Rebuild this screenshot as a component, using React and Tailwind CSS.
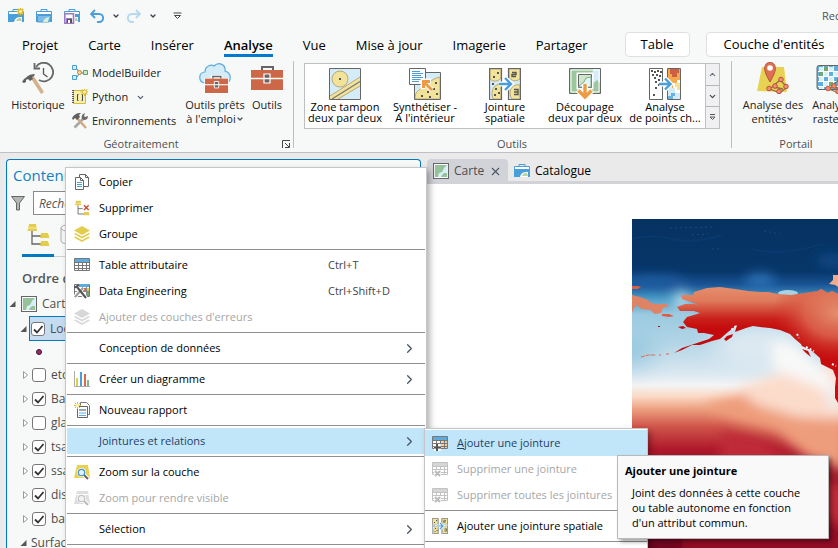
import { LuX } from "react-icons/lu";
import { FiChevronDown, FiChevronRight, FiChevronUp } from "react-icons/fi";

const tabs = ["Projet", "Carte", "Insérer", "Analyse", "Vue", "Mise à jour", "Imagerie", "Partager"];

const layers = [
  { name: "etopo", checked: false },
  { name: "Base", checked: true },
  { name: "glaciers", checked: false },
  { name: "tsanom", checked: true },
  { name: "ssanom", checked: true },
  { name: "distance", checked: true },
  { name: "bathy", checked: true },
];

/* ---------- Icons ---------- */

function CatalogIcon({ extra }) {
  return (
    <svg width="16" height="16" viewBox="0 0 16 16" className="shrink-0">
      <path d="M5 3.5V1.5h6v2" fill="none" stroke="#4a9cd6" />
      <path d="M.5 3.5h15v3H.5z" fill="#fff" stroke="#4a9cd6" />
      <path d="M0 6h16v8H0z" fill="#4a9fdb" />
      <path d="M6 14c1-4 3-5 8-5v5z" fill="#fff" />
      <path d="M8 13c1-3 3-3 5-3l1 3z" fill="#b9d3a0" />
      {extra === "new" && (
        <>
          <path d="M12.500-.5v8M8.500 3.500h8M9.700.7l5.600 5.600M15.300.7L9.700 6.300" stroke="#d9b92d" strokeWidth="1.300" />
          <circle cx="12.500" cy="3.500" r="2" fill="#fbf0a0" stroke="#d9b92d" />
        </>
      )}
      {extra === "open" && (
        <>
          <path d="M1 7h12v7H1z" fill="#fff" />
          <path d="M1.500 14V7.500h14L13 14z" fill="#7bbce8" stroke="#4a9cd6" />
          <path d="M7 14c1-4 3-4 6-5l-1 5z" fill="#dcefd2" />
        </>
      )}
      {extra === "save" && (
        <>
          <path d="M0 5h11v11H0z" fill="#fff" />
          <path d="M.8 5.800h8.700v9.400H.8z" fill="#fff" stroke="#9b7cc0" strokeWidth="1.600" />
          <path d="M2 10h6v5H2z" fill="#9b7cc0" />
          <path d="M3 11h5v4H3z" fill="#555" />
          <path d="M4 12h2v3H4z" fill="#fff" />
        </>
      )}
    </svg>
  );
}

function UndoIcon({ redo }) {
  return (
    <svg width="14" height="14" viewBox="0 0 14 14" className={redo ? "-scale-x-100" : ""}>
      <path
        d="M5 1L1 5l4 4M1.500 5H9c5.500 0 5.500 8 0 8H7"
        fill="none"
        stroke={redo ? "#b7d9f0" : "#4a9fdb"}
        strokeWidth="1.900"
      />
    </svg>
  );
}

function HistoryIcon() {
  return (
    <svg width="32" height="32" viewBox="0 0 32 32">
      <path d="M14 5a9.300 9.300 0 1 1 3 13" fill="none" stroke="#666" strokeWidth="1.800" />
      <path d="M12.500 1v5.500H18" fill="none" stroke="#666" strokeWidth="1.800" />
      <path d="M21.500 6v6l4 3" fill="none" stroke="#555" strokeWidth="1.300" />
      <path d="M8 15l3-2 11 17-3 2z" fill="#d5b08c" />
      <path d="M0 20l2-3c3-2 5-5 11-5l-1 2-2 1 1 2-3 2-2-2-2 1v2l-2 1z" fill="#606060" />
    </svg>
  );
}

function ModelIcon() {
  return (
    <svg width="16" height="16" viewBox="0 0 16 16">
      <path d="M4 3l4 5-4 5M7 8h5" fill="none" stroke="#666" />
      <path d="M.5.500h4v4h-4zM.5 10.500h4v4h-4z" fill="#d4ecfa" stroke="#4a9fdb" />
      <circle cx="7.500" cy="7.500" r="2" fill="#f6d99e" stroke="#b98a3e" />
      <path d="M11.500 5.500h4v4h-4z" fill="#cfe8c9" stroke="#5ea36c" />
    </svg>
  );
}

function PythonIcon() {
  return (
    <svg width="16" height="16" viewBox="0 0 16 16">
      <path d="M1.500 1.500h12v13h-12z" fill="#f7efae" stroke="#d5bb3c" />
      <path d="M1 1v14" stroke="#555" strokeWidth="2" strokeDasharray="1 1" />
      <path d="M6.500 5.500h-1v6h1M9.500 5.500h1v6h-1" fill="none" stroke="#444" />
      <path d="M12.500-1v8M8.500 3h8M9.700.2l5.600 5.600M15.300.2L9.700 5.800" stroke="#d9b92d" />
      <circle cx="12.500" cy="3" r="2" fill="#fff6b5" stroke="#d9b92d" />
    </svg>
  );
}

function EnvIcon() {
  return (
    <svg width="16" height="16" viewBox="0 0 16 16">
      <path d="M2.500 14.500L12 5" stroke="#a7a7a7" strokeWidth="2.600" />
      <path d="M10 6c-1-3 0-5 3-6l-1 3 1 1 3-1c0 3-2 4-4 4z" fill="#696969" />
      <path d="M5 5l9 10" stroke="#d0aa87" strokeWidth="2.600" />
      <path d="M0 5c2-3 4-5 9-5L7 2l1 2-3 3-2-2-2 2z" fill="#606060" />
    </svg>
  );
}

function Toolbox({ cloud }) {
  return (
    <svg width="32" height="32" viewBox="0 0 32 32">
      {cloud && (
        <path
          d="M6 21C-1 20-1 10 6 10 6 4 12 2 15 4c5-5 12-1 11 5 7 2 7 11 0 12z"
          fill="#d4ebf8"
          stroke="#5babde"
          strokeWidth="1.200"
        />
      )}
      <g transform={cloud ? "translate(6 13) scale(.72)" : "translate(0 3)"}>
        {cloud && <path d="M-1 4h9V0h16v4h9v22H-1z" fill="#fff" />}
        <path d="M11 5V2h11v3" fill="none" stroke="#666" strokeWidth="2" />
        <path d="M0 5h32v20H0z" fill="#cc6848" />
        <path d="M0 13.500h32" stroke="#fff" strokeWidth="1.500" />
        <path d="M13 9h6v9h-6z" fill="#666" stroke="#fff" strokeWidth="1.200" />
        <path d="M13 13.500h6" stroke="#fff" strokeWidth="1.500" />
      </g>
    </svg>
  );
}

function BufferIcon() {
  return (
    <svg width="32" height="32" viewBox="0 0 32 32">
      <path d="M.5.500h31v31H.5z" fill="#d4ebf8" />
      <path d="M1 28L31 9v9L9 31H1z" fill="#f2e39a" />
      <path d="M1 28L31 9M9 31l22-13" stroke="#b9a878" />
      <path d="M3 31l28-17.500" stroke="#777" strokeWidth="1.300" />
      <circle cx="11" cy="11" r="8" fill="#f2e39a" stroke="#b9a878" />
      <path d="M10 10h2v2h-2z" fill="#555" />
      <path d="M.5.500h31v31H.5z" fill="none" stroke="#666" />
    </svg>
  );
}

function SummarizeIcon() {
  return (
    <svg width="32" height="32" viewBox="0 0 32 32">
      <path d="M5.500 4.500h26v27h-26z" fill="#d4ebf8" />
      <path d="M6 31c0-8 3-7 6-11 6-2 9-9 19-11v22z" fill="#f2e39a" stroke="#b9a878" />
      <path d="M18 23h2v2h-2zM24 20h2v2h-2zM26 14h2v2h-2zM12 27h2v2h-2zM20 28h2v2h-2zM27 25h2v2h-2z" fill="#555" />
      <path d="M5.500 4.500h26v27h-26z" fill="none" stroke="#666" />
      <path d="M.5.500h16v16H.5z" fill="#fff" stroke="#666" />
      <path d="M3 3.500h8M3 5.500h11M3 7.500h9M3 9.500h11M3 11.500h11M3 13.500h7" stroke="#4a9fdb" />
      <path d="M14 21v-8h8M15 14l8 8" fill="none" stroke="#fff" strokeWidth="5" />
      <path d="M14.500 20v-6.500H21M15 14l8 8" fill="none" stroke="#ec9c45" strokeWidth="3" />
    </svg>
  );
}

function SpatialJoinIcon({ size = 32 }) {
  return (
    <svg width={size} height={size} viewBox="0 0 32 32" className="shrink-0">
      <path d="M.5.500h12v31H.5zM19.500.500h12v31h-12z" fill="#d4ebf8" />
      <path d="M1 1h11v9c-3 4-8 4-11 1zM12 16c-7 0-11 7-8 15h8zM20 1h11v10c-4 3-9 2-11-2zM31 17c-8-2-13 7-8 14h8z" fill="#f2e39a" stroke="#b9a878" />
      <path d="M4 8h2v2H4zM8 4h2v2H8zM6 20h2v2H6zM9 24h2v2H9zM5 26h2v2H5zM3 15h2v2H3z" fill="#555" />
      <path d="M23 4.500h4v2h-4v2h4M25 21.500h4v5h-4M25 24h4" fill="none" stroke="#555" strokeWidth="1.400" />
      <path d="M.5.500h12v31H.5zM19.500.500h12v31h-12z" fill="none" stroke="#666" strokeWidth="1.200" />
      <path d="M10 16h11M16 10l6 6-6 6" fill="none" stroke="#fff" strokeWidth="5" />
      <path d="M10 16h11M16 10l6 6-6 6" fill="none" stroke="#4a9fdb" strokeWidth="2.400" />
    </svg>
  );
}

function ClipIcon() {
  return (
    <svg width="32" height="32" viewBox="0 0 32 32">
      <path d="M.5.500h31v25H.5z" fill="#9cc69d" />
      <path d="M24 1h7v14l-3-3-3 3-2-5z" fill="#d4ebf8" />
      <path d="M2 2h28v22H2z" fill="none" stroke="#fff" />
      <path d="M7.500 4.500h17v17h-17z" fill="#fff" />
      <path d="M9.500 6.500h13v13h-13z" fill="#cfe6c9" stroke="#666" />
      <path d="M10 18l5-4 2-4 5-1v10H10z" fill="#e4f3fb" stroke="#7dae83" />
      <path d="M.5.500h31v25H.5z" fill="none" stroke="#666" />
      <path d="M16 16v13M9 22l7 7 7-7" fill="none" stroke="#fff" strokeWidth="6" />
      <path d="M16 16v13M9.500 22.500l6.500 6.500 6.500-6.500" fill="none" stroke="#ec9c45" strokeWidth="3.400" />
    </svg>
  );
}

function HotSpotIcon() {
  return (
    <svg width="32" height="32" viewBox="0 0 32 32">
      <path d="M.5.500h13v31H.5zM18.500.500h13v31h-13z" fill="#fff" />
      <path
        d="M2 2h2v2H2zM5 3h2v2H5zM8 2h2v2H8zM11 3h2v2h-2zM3 6h2v2H3zM7 6h2v2H7zM10 7h2v2h-2zM5 9h2v2H5zM9 11h2v2H9zM6 13h2v2H6zM9 16h2v2H9zM6 19h2v2H6zM4 26h2v2H4z"
        fill="#555"
      />
      <path d="M19 1h12v11h-3v3h-4v5h-2v-5h-3z" fill="#f6a94c" />
      <path d="M21 1h9v4h-2v4h-5V6h-2z" fill="#cc6042" />
      <path d="M19 17h4v3h3v5h5v6H19z" fill="#d4ebf8" />
      <path d="M19 28h3v-3h4v3h-2v3h-5z" fill="#65b3e3" />
      <path d="M26 15h5v7h-3v-3h-2z" fill="#f9df91" />
      <path d="M.5.500h13v31H.5zM18.500.500h13v31h-13z" fill="none" stroke="#666" />
      <path d="M10 16h11M16 10.500l5.500 5.500-5.500 5.500" fill="none" stroke="#fff" strokeWidth="5" />
      <path d="M10 16h11M16 10.500l5.500 5.500-5.500 5.500" fill="none" stroke="#4a9fdb" strokeWidth="2.400" />
    </svg>
  );
}

function FeatureNodes() {
  return (
    <g fill="#ee8f70" stroke="#c0503a">
      <path d="M13 27l10-9 7 7-7 6zM17 25l9 2" fill="none" stroke="#8a7240" strokeWidth="1.300" />
      <circle cx="12" cy="26.500" r="2.300" />
      <circle cx="18" cy="24" r="2.300" />
      <circle cx="24" cy="17.500" r="2.300" />
      <circle cx="29" cy="24.500" r="2.300" />
      <circle cx="22" cy="29.500" r="2.300" />
    </g>
  );
}

function FeatureIcon() {
  return (
    <svg width="32" height="32" viewBox="0 0 32 32">
      <path d="M5 5h22l3 25-30-1z" fill="#e8d254" />
      <path d="M13 20C8 11 7 8 8 4c2-5 8-5 10 0 1 4 0 7-5 16z" fill="#dd6f53" stroke="#b9523b" />
      <circle cx="13" cy="6" r="2.800" fill="#fff" />
      <FeatureNodes />
    </svg>
  );
}

function RasterIcon() {
  return (
    <svg width="32" height="32" viewBox="0 0 32 32" className="shrink-0">
      <rect x="1" y="3.500" width="30" height="24" rx="2" fill="#5dafe2" stroke="#666" />
      <path d="M3 5h4v4H3zM13 5h4v4h-4zM8 10h4v4H8zM18 10h4v4h-4zM3 15h4v4H3zM13 15h4v4h-4zM8 20h4v4H8zM3 24h4v3H3z" fill="#d9effa" />
      <path d="M8 5h4v4H8zM3 10h4v4H3zM13 20h4v4h-4z" fill="#72a86f" />
      <path d="M7.500 4v23M12.500 4v23M17.500 4v23M22.500 4v23M2 9.500h28M2 14.500h28M2 19.500h28M2 24.500h28" stroke="#fff" />
      <FeatureNodes />
    </svg>
  );
}

function MapIcon() {
  return (
    <svg width="16" height="16" viewBox="0 0 16 16" className="shrink-0">
      <path d="M.5.500h15v15H.5z" fill="#fff" stroke="#666" strokeWidth="1.200" />
      <path d="M2 2h12v12H2z" fill="#96c29a" />
      <path d="M14 2v8h-3l-2 2-1 2H5l1-4 3-1 2-4z" fill="#d8effa" />
    </svg>
  );
}

function TreeIcon({ large, remove }) {
  return (
    <svg width={large ? 24 : 16} height={large ? 24 : 16} viewBox="0 0 24 24" className="shrink-0">
      <path d="M6 8v13h9M6 13h9" fill="none" stroke="#666" strokeWidth="1.300" />
      <path d="M3 1h7l1 7H1.500zM15 10h7l1.500 5H14zM15 18h7l1.500 5H14z" fill="#e4cd4e" />
      <path d="M1.500 5h9" stroke="#f5ebb4" />
      {remove && (
        <>
          <path d="M13 7h10v10H13z" fill="#fff" />
          <path d="M15 8l7 7m0-7l-7 7" stroke="#cc4e35" strokeWidth="2.200" />
        </>
      )}
    </svg>
  );
}

function CopyIcon() {
  return (
    <svg width="16" height="16" viewBox="0 0 16 16">
      <path d="M5.500.500h6l3 3v9h-9z" fill="#fff" stroke="#666" />
      <path d="M11.500.500v3h3" fill="none" stroke="#666" />
      <path d="M1.500 3.500h5l3 3v9h-8z" fill="#fff" stroke="#666" />
      <path d="M6.500 3.500v3h3" fill="none" stroke="#666" />
      <path d="M3 8.500h5M3 10.500h5M3 12.500h5" stroke="#4a9fdb" />
    </svg>
  );
}

function LayersIcon({ disabled }) {
  const color = disabled ? "#d8d8d8" : "#e4cd4e";
  return (
    <svg width="16" height="16" viewBox="0 0 16 16">
      <path d="M0 4.500L8 0l8 4.500L8 9z" fill={color} />
      <path d="M0 8l1.500-1L8 10.500 14.500 7 16 8l-8 4.500zM0 11.500l1.500-1L8 14l6.500-3.500 1.500 1L8 16z" fill={color} />
    </svg>
  );
}

function TableIcon({ mark, disabled }) {
  const line = disabled ? "#c2c2c2" : "#777";
  return (
    <svg width="16" height="16" viewBox="0 0 16 16">
      <path d="M.5 1.500h15v12H.5z" fill="#fff" stroke={line} />
      {mark === "plus" && <path d="M9 5h6v8H9z" fill="#f5cf9e" />}
      <path d="M1 2h14v3H1z" fill={disabled ? "#d6d6d6" : "#5babde"} />
      <path d="M4.500 5v8M8.500 5v8M12.500 5v8M1 5.500h14M1 8.500h14M1 11.500h14" stroke={line} />
      {mark && <path d="M2 9h7v7H2z" fill="#fff" fillOpacity=".8" />}
      {mark === "plus" && <path d="M5 9v7M2 12.500h7" stroke="#555" strokeWidth="2" />}
      {mark === "cross" && <path d="M3 10l5 5m0-5l-5 5" stroke="#bbb" strokeWidth="2" />}
    </svg>
  );
}

function EngineeringIcon() {
  return (
    <svg width="16" height="16" viewBox="0 0 16 16">
      <path d="M.5 1.500h15v12H.5z" fill="#fff" stroke="#777" />
      <path d="M5 1h10v3H5z" fill="#5babde" />
      <path d="M9 5h3v3H9z" fill="#d96b4d" />
      <path d="M12 5h3v3h-3z" fill="#e4cd4e" />
      <path d="M12 9h3v4h-3z" fill="#72a86f" />
      <path d="M8.500 4v9M12.500 4v9M1 8.500h14" stroke="#888" />
      <path d="M1 14l8-9M2 4l10 11" stroke="#fff" strokeWidth="4" />
      <path d="M1 14l8-9" stroke="#999" strokeWidth="2" />
      <path d="M3 4l9 11M0 5l5-3" stroke="#555" strokeWidth="2" />
    </svg>
  );
}

function ChartIcon() {
  return (
    <svg width="16" height="16" viewBox="0 0 16 16">
      <path d="M.5 0v15.500H16" fill="none" stroke="#aaa" />
      <path d="M2 7h2v8H2z" fill="#e4cd4e" />
      <path d="M6 1h2v14H6z" fill="#4a9fdb" />
      <path d="M10 3h2v12h-2z" fill="#d96b4d" />
      <path d="M13 9h2v6h-2z" fill="#85b685" />
    </svg>
  );
}

function ReportIcon() {
  return (
    <svg width="16" height="16" viewBox="0 0 16 16">
      <path d="M6.500.500h6l3 3v9h-9z" fill="#fff" stroke="#777" />
      <path d="M3.500 4.500h10v11h-10z" fill="#fff" stroke="#666" />
      <path d="M5 7h7v2H5z" fill="#9aa6ad" />
      <path d="M5 11h7M5 13.500h7" stroke="#5babde" />
      <path d="M3.500 0v7M0 3.500h7M1 1l5 5m0-5L1 6" stroke="#d9b92d" />
      <circle cx="3.500" cy="3.500" r="1.700" fill="#fff0a4" />
    </svg>
  );
}

function ZoomLayerIcon({ disabled }) {
  const line = disabled ? "#c4c4c4" : "#4a93cc";
  return (
    <svg width="16" height="16" viewBox="0 0 16 16">
      <path d="M3 1h11l2 13H0z" fill={disabled ? "#dedede" : "#e8d254"} />
      {disabled && <path d="M1 4.500h14" stroke="#fff" />}
      <path d="M10 11l4 4" stroke="#fff" strokeWidth="4" />
      <circle cx="7.500" cy="8.500" r="4.500" fill="#fff" />
      <path d="M10 11l4 4" stroke={disabled ? "#bbb" : "#666"} strokeWidth="2" />
      <circle cx="7.500" cy="8.500" r="3.200" fill={disabled ? "#f2f2f2" : "#e3f3fc"} stroke={line} strokeWidth="1.300" />
    </svg>
  );
}

function Expander({ open }) {
  return (
    <svg width="7" height="8" viewBox="0 0 7 8" className="shrink-0">
      {open ? (
        <path d="M6.500 1v6h-6z" fill="#555" />
      ) : (
        <path d="M1.500.500L5.500 4l-4 3.500z" fill="#fff" stroke="#999" />
      )}
    </svg>
  );
}

/* ---------- Ribbon ---------- */

function BigButton({ icon, lines, arrow, className }) {
  return (
    <button className={`flex flex-col items-center shrink-0 text-[11px] leading-[14px] whitespace-nowrap ${className}`}>
      <span className="h-9">{icon}</span>
      {lines.map((line, i) => (
        <span key={line} className="flex items-center">
          {line}
          {arrow && i === lines.length - 1 && <FiChevronDown size={8} strokeWidth={4} className="text-gray-600" />}
        </span>
      ))}
    </button>
  );
}

function SmallButton({ icon, label, arrow }) {
  return (
    <button className="flex items-center h-6 gap-1 text-[11px] whitespace-nowrap">
      {icon}
      {label}
      {arrow && <FiChevronDown size={9} strokeWidth={3} className="ml-1 text-gray-600" />}
    </button>
  );
}

function GalleryItem({ icon, lines }) {
  return (
    <button className="w-20 pt-1 flex flex-col items-center text-[11px] leading-[11px] whitespace-nowrap">
      <span className="h-[33px]">{icon}</span>
      {lines.map((line) => (
        <span key={line}>{line}</span>
      ))}
    </button>
  );
}

function GroupLabel({ children }) {
  return <div className="mt-auto mb-[-4px] text-center text-[11px] leading-4 text-[#505050]">{children}</div>;
}

function Ribbon() {
  return (
    <div className="flex h-[95px] shrink-0 pt-[3px] border-b border-[#c0c0c4]">
      {/* Geoprocessing */}
      <div className="w-[294px] shrink-0 flex flex-col border-r border-[#bcbfc0] mb-1">
        <div className="flex">
          <BigButton className="w-[72px] pl-1 pt-[1px]" icon={<HistoryIcon />} lines={["Historique"]} />
          <div className="w-[111px]">
            <SmallButton icon={<ModelIcon />} label="ModelBuilder" />
            <SmallButton icon={<PythonIcon />} label="Python" arrow />
            <SmallButton icon={<EnvIcon />} label="Environnements" />
          </div>
          <BigButton className="w-[64px] pt-[1px]" icon={<Toolbox cloud />} lines={["Outils prêts", "à l'emploi"]} arrow />
          <BigButton className="w-[40px] pt-[1px]" icon={<Toolbox />} lines={["Outils"]} />
        </div>
        <div className="mt-auto mb-[-4px] flex items-center">
          <div className="mx-auto text-[11px] leading-4 text-[#505050]">Géotraitement</div>
          <button aria-label="Options" className="mr-[3px]">
            <svg width="8" height="8" viewBox="0 0 8 8">
              <path d="M.5 8V.5H8M3 3l4 4M7.500 3v4.500H3" fill="none" stroke="#444" />
            </svg>
          </button>
        </div>
      </div>

      {/* Tools gallery */}
      <div className="w-[438px] shrink-0 flex flex-col border-r border-[#bcbfc0] mb-1 pl-[10px] pr-[11px] pt-[2px]">
        <div className="flex h-[66px] bg-white border border-[#bfbfc3] text-black">
          <GalleryItem icon={<BufferIcon />} lines={["Zone tampon", "deux par deux"]} />
          <GalleryItem icon={<SummarizeIcon />} lines={["Synthétiser -", "A l'intérieur"]} />
          <GalleryItem icon={<SpatialJoinIcon />} lines={["Jointure", "spatiale"]} />
          <GalleryItem icon={<ClipIcon />} lines={["Découpage", "deux par deux"]} />
          <GalleryItem icon={<HotSpotIcon />} lines={["Analyse", "de points ch..."]} />
          <div className="ml-auto w-[14px] flex flex-col border-l border-[#bfbfc3] bg-[#f0f0f3] text-gray-700">
            <button aria-label="Précédent" className="flex-1 flex items-center justify-center text-gray-500">
              <FiChevronUp size={9} strokeWidth={3} />
            </button>
            <button aria-label="Suivant" className="flex-1 flex items-center justify-center border-y border-[#b4b4b9]">
              <FiChevronDown size={9} strokeWidth={3} />
            </button>
            <button aria-label="Tous les outils" className="flex-1 flex items-center justify-center">
              <svg width="7" height="7" viewBox="0 0 7 7">
                <path d="M1 .5h5M1 3l2.500 2.500L6 3z" fill="none" stroke="#555" />
              </svg>
            </button>
          </div>
        </div>
        <GroupLabel>Outils</GroupLabel>
      </div>

      {/* Portal */}
      <div className="flex flex-col shrink-0 mb-1 w-[128px]">
        <div className="flex">
          <BigButton className="w-[82px] pt-[1px]" icon={<FeatureIcon />} lines={["Analyse des", "entités"]} arrow />
          <BigButton className="w-[36px] pt-[1px]" icon={<RasterIcon />} lines={["Analyse", "raster"]} arrow />
        </div>
        <GroupLabel>Portail</GroupLabel>
      </div>
    </div>
  );
}

/* ---------- Contents panel ---------- */

function Check({ label, checked }) {
  return (
    <label className="flex items-center gap-[5px]">
      <span className="relative block w-[14px] h-[14px]">
        <input
          type="checkbox"
          defaultChecked={checked}
          className="peer block appearance-none w-[14px] h-[14px] rounded-[3px] border border-[#777] bg-white"
        />
        <svg viewBox="0 0 14 14" className="absolute inset-0 hidden peer-checked:block pointer-events-none">
          <path d="M3 7.500l3 3L11.500 4" fill="none" stroke="#333" strokeWidth="1.800" />
        </svg>
      </span>
      {label}
    </label>
  );
}

function ContentsPanel() {
  return (
    <aside className="w-[415px] shrink-0 ml-[6px] mt-[6px] rounded-t border border-b-0 border-[#0079c1] bg-[#f7f9f8] text-[12px] text-[#4c4c4c]">
      <h2 className="h-[31px] pl-[6px] text-[15px] leading-[31px] text-[#147fc1]">Contenu</h2>
      <div className="flex items-center gap-2 h-6 pl-1">
        <svg width="14" height="16" viewBox="0 0 14 16">
          <path d="M.5 1.500h13L8.500 8v7h-3V8z" fill="#b4b4b9" stroke="#666" />
        </svg>
        <input
          type="text"
          aria-label="Rechercher"
          placeholder="Rechercher"
          className="w-[340px] h-6 px-[5px] bg-white border border-[#8a8a8a] italic placeholder:text-[#555]"
        />
      </div>
      <div className="flex h-[42px] pt-[8px] mx-[15px] border-b border-[#cfcfcf]">
        <button aria-label="Ordre de dessin" className="w-8 h-[34px] flex justify-center border-b-3 border-[#0079c1]">
          <TreeIcon large />
        </button>
        <button aria-label="Source de données" className="w-8 flex justify-center">
          <svg width="22" height="24" viewBox="0 0 22 24">
            <path d="M2 5v13c0 4 18 4 18 0V5" fill="none" stroke="#aaa" />
            <ellipse cx="11" cy="5" rx="9" ry="3.500" fill="none" stroke="#aaa" />
          </svg>
        </button>
      </div>
      <h3 className="h-[35px] pl-[15px] pt-1 text-[13px] leading-[34px] font-semibold text-[#555]">Ordre de dessin</h3>
      <div className="flex items-center gap-[5px] h-6 pl-[2px]">
        <Expander open />
        <MapIcon />
        Carte
      </div>
      <div className="flex items-center gap-[2px] h-[25px] pl-[13px]">
        <Expander open />
        <div className="flex items-center flex-1 h-[25px] px-[1px] border border-[#0079c1] bg-[#c5dcf0]">
          <Check label="Localisations" checked />
        </div>
      </div>
      <div className="h-[22px] pl-[29px] pt-2">
        <div className="w-[6px] h-[6px] rounded-full bg-[#9c2b63] border border-[#3c1729]"></div>
      </div>
      {layers.map((layer) => (
        <div key={layer.name} className="flex items-center gap-[3px] h-6 pl-[15px]">
          <Expander />
          <Check label={layer.name} checked={layer.checked} />
        </div>
      ))}
      <div className="flex items-center gap-1 h-6 pl-[13px]">
        <Expander open />
        Surfaces
      </div>
    </aside>
  );
}

/* ---------- Map view ---------- */

function TemperatureRaster() {
  return (
    <svg viewBox="0 0 206 329" preserveAspectRatio="xMinYMin slice" className="w-full h-full">
      <defs>
        <linearGradient id="sea" x1="0" y1="0" x2="0" y2="1">
          <stop offset="0" stopColor="#063262" />
          <stop offset=".16" stopColor="#073669" />
          <stop offset=".2" stopColor="#1a5596" />
          <stop offset=".24" stopColor="#4a99c6" />
          <stop offset=".29" stopColor="#9bcae0" />
          <stop offset=".38" stopColor="#b4d6e7" />
          <stop offset=".47" stopColor="#dbe8f1" />
          <stop offset=".505" stopColor="#f4f4f5" />
          <stop offset=".54" stopColor="#fbd9c5" />
          <stop offset=".58" stopColor="#ec9c7c" />
          <stop offset=".63" stopColor="#d0564b" />
          <stop offset=".7" stopColor="#ae182b" />
          <stop offset=".84" stopColor="#860d24" />
          <stop offset="1" stopColor="#70061f" />
        </linearGradient>
        <linearGradient id="land" x1="0" y1="0" x2="0" y2="1">
          <stop offset="0" stopColor="#e5906f" />
          <stop offset=".12" stopColor="#df7b5c" />
          <stop offset=".26" stopColor="#c9201a" />
          <stop offset=".34" stopColor="#c40a0c" />
          <stop offset="1" stopColor="#c9100f" />
        </linearGradient>
        <radialGradient id="inland">
          <stop offset="0" stopColor="#e58e6e" />
          <stop offset=".5" stopColor="#dc6b51" stopOpacity=".8" />
          <stop offset="1" stopColor="#cc2c22" stopOpacity="0" />
        </radialGradient>
        <filter id="soft" x="-50%" y="-50%" width="200%" height="200%">
          <feGaussianBlur stdDeviation="6" />
        </filter>
        <filter id="softer" x="-50%" y="-50%" width="200%" height="200%">
          <feGaussianBlur stdDeviation="12" />
        </filter>
        <clipPath id="coast">
          <path d="M49 76H61L62 73 75 69 88 68 103 70 116 72 128 73H136L146 75 159 76 173 74 186 72 189 70 196 74 200 72 206 75V184L203 179V168L204 159 201 151 189 145 188 139 179 131 170 127 169 125 163 120 158 115 148 111 138 109 128 108 121 107 114 109 103 113 105 106 96 113 88 120 80 122 68 126 60 126 50 131 42 134 50 129 65 124 77 120 82 116 72 114H66L65 110 55 108 51 103 55 98 65 95 68 94 62 92H48L45 88 53 85H63L67 86 59 83 50 80z" />
        </clipPath>
      </defs>

      <rect width="206" height="329" fill="url(#sea)" />

      {/* arctic water */}
      <g filter="url(#soft)">
        <ellipse cx="128" cy="61" rx="15" ry="6" fill="#2f78bd" />
        <ellipse cx="200" cy="42" rx="16" ry="8" fill="#0e4480" />
        <ellipse cx="20" cy="62" rx="34" ry="5" fill="#2262a8" />
        <ellipse cx="50" cy="82" rx="8" ry="9" fill="#b9dbe9" />
      </g>
      <path d="M0 20q20-5 40 0t50-4M120 30q30 8 70-5" fill="none" stroke="#0d427a" strokeWidth="2" opacity=".4" />
      <path d="M38 9l45-1M60 16l16-1M132 12l16 3M80 30h10" stroke="#285384" strokeDasharray="2 3" strokeWidth=".7" />
      <ellipse cx="156" cy="74" rx="10" ry="3" fill="#a8d2e2" />

      {/* gulf and warm belt */}
      <g filter="url(#softer)">
        <ellipse cx="130" cy="128" rx="50" ry="24" fill="#dfeaf2" />
        <ellipse cx="0" cy="132" rx="22" ry="14" fill="#8ec3dc" />
      </g>
      <g filter="url(#soft)">
        <path d="M70 186l55-14 90-10v90l-40-14-30-24-40-12z" fill="#ee9d7c" />
        <path d="M105 170l50-18 60-10v58l-50-2-40-12z" fill="#fbdccb" />
        <path d="M90 212l40 8 34 26 60 26v60H80z" fill="#bf2a37" />
        <path d="M50 250l60 14 110 46v30H50z" fill="#930f27" />
        <path d="M140 122l22 3 18 15 18 16 8 24-24-14-22-8-20-8z" fill="#f8f8f8" />
        <ellipse cx="202" cy="178" rx="5" ry="14" fill="#eaf1f6" />
      </g>

      {/* land */}
      <g clipPath="url(#coast)">
        <rect y="66" width="206" height="130" fill="url(#land)" />
        <ellipse cx="206" cy="94" rx="66" ry="48" fill="url(#inland)" />
      </g>
      <path d="M0 76l8 2 8 3 3 3 4 1h11l3 2-6 2-2 5-6 1-5-4-9-1-4-4-3 3-2 5z" fill="#df8367" />
      <path d="M0 67h6l3 1-3 2H0zM30 95h7l5 2-5 1-7-1z" fill="#d95f46" />
      <path d="M92 120l3-3 6-2-1 3-6 4zM46 108l5-1 3 2-4 1zM170 130l6 2 3 6-5-4zM26 107h2v1h-2z" fill="#c40a0c" />
      <path d="M9 138l7-2h8M27 136h2M34 135h3" fill="none" stroke="#db6b50" strokeDasharray="4 1" />
      <path d="M165 115l2 4M174 128l8 4M200 145l4 2M104 107l-6 5" stroke="#eff4f7" strokeWidth="2" strokeDasharray="2 2" />
      <path d="M201 56h5v12l-3-2-6-1 4-4z" fill="#efab8b" />
    </svg>
  );
}

function MapView() {
  return (
    <main className="flex-1 min-w-0 ml-[6px] mt-[6px] flex flex-col text-[12px]">
      <div role="tablist" className="flex h-[25px] border-b-3 border-[#d2d3d8]">
        <div className="flex items-center gap-[5px] w-[81px] h-6 px-[6px] rounded-t bg-[#d2d3d8] text-[#4c4c4c]">
          <MapIcon />
          <button role="tab" aria-selected="true">Carte</button>
          <button aria-label="Fermer" className="ml-auto">
            <LuX size={13} className="text-gray-600" />
          </button>
        </div>
        <button role="tab" aria-selected="false" className="flex items-center gap-[5px] px-[6px] pt-[2px] text-black">
          <CatalogIcon />
          Catalogue
        </button>
      </div>
      <div className="flex-1 min-h-0 pl-[205px] pt-[35px] bg-white overflow-hidden">
        <TemperatureRaster />
      </div>
    </main>
  );
}

/* ---------- Menus ---------- */

function MenuItem({ icon, label, shortcut, arrow, disabled, active, accel }) {
  const color = disabled ? "text-[#a6a6a6]" : active ? "text-[#1f3f66]" : "text-black";
  return (
    <button
      role="menuitem"
      disabled={disabled}
      className={`flex items-center w-full h-[26px] pl-[7px] text-left whitespace-nowrap ${color} ${active ? "bg-[#c2e6f9]" : ""}`}
    >
      <span className="w-[25px] shrink-0">{icon}</span>
      <span className="flex-1">
        {accel && <u>{accel}</u>}
        {label}
      </span>
      {shortcut && <span className="w-[97px] text-[#444]">{shortcut}</span>}
      {arrow && <FiChevronRight size={15} className="mr-2 text-gray-600" />}
    </button>
  );
}

function Separator() {
  return <hr className="my-[2px] border-[#8f8f8f]" />;
}

function ContextMenu() {
  return (
    <div role="menu" className="absolute left-[65px] top-[167px] w-[362px] p-[1px] bg-white border border-[#c6c6ca] shadow-[3px_3px_6px_rgba(0,0,0,0.3)] text-[11px]">
      <MenuItem icon={<CopyIcon />} label="Copier" />
      <MenuItem icon={<TreeIcon remove />} label="Supprimer" />
      <MenuItem icon={<LayersIcon />} label="Groupe" />
      <Separator />
      <MenuItem icon={<TableIcon />} label="Table attributaire" shortcut="Ctrl+T" />
      <MenuItem icon={<EngineeringIcon />} label="Data Engineering" shortcut="Ctrl+Shift+D" />
      <MenuItem icon={<LayersIcon disabled />} label="Ajouter des couches d'erreurs" disabled />
      <Separator />
      <MenuItem label="Conception de données" arrow />
      <Separator />
      <MenuItem icon={<ChartIcon />} label="Créer un diagramme" arrow />
      <Separator />
      <MenuItem icon={<ReportIcon />} label="Nouveau rapport" />
      <Separator />
      <MenuItem label="Jointures et relations" arrow active />
      <Separator />
      <MenuItem icon={<ZoomLayerIcon />} label="Zoom sur la couche" />
      <MenuItem icon={<ZoomLayerIcon disabled />} label="Zoom pour rendre visible" disabled />
      <Separator />
      <MenuItem label="Sélection" arrow />
      <Separator />
    </div>
  );
}

function JoinMenu() {
  return (
    <div role="menu" className="absolute left-[424px] top-[428px] w-[224px] pt-[1px] pb-6 bg-white border border-[#c6c6ca] shadow-[3px_3px_6px_rgba(0,0,0,0.3)] text-[11px]">
      <MenuItem icon={<TableIcon mark="plus" />} accel="A" label="jouter une jointure" active />
      <MenuItem icon={<TableIcon mark="cross" disabled />} label="Supprimer une jointure" disabled />
      <MenuItem icon={<TableIcon mark="cross" disabled />} label="Supprimer toutes les jointures" disabled />
      <Separator />
      <MenuItem icon={<SpatialJoinIcon size={16} />} label="Ajouter une jointure spatiale" />
      <Separator />
    </div>
  );
}

function Tooltip() {
  return (
    <div role="tooltip" className="absolute left-[617px] top-[455px] w-[212px] px-[7px] pt-[7px] pb-2 bg-[#f9f9f9] border border-[#b9b9b9] shadow-[3px_3px_4px_rgba(0,0,0,0.35)] text-[11px] leading-[15px] text-black">
      <p className="font-bold">Ajouter une jointure</p>
      <p className="pl-[7px] pt-[7px] whitespace-nowrap">
        Joint des données à cette couche
        <br />
        ou table autonome en fonction
        <br />
        d'un attribut commun.
      </p>
    </div>
  );
}

export default function App() {
  return (
    <div className="relative flex flex-col h-screen overflow-hidden bg-[#eaeaea] font-['Open_Sans','Noto_Sans',sans-serif] text-[#222]">
      <div className="bg-[#f7f9f8]">
        {/* Quick access */}
        <div className="flex items-center h-8 pl-2 text-[11px]">
          <div className="flex gap-3">
            <button aria-label="Nouveau"><CatalogIcon extra="new" /></button>
            <button aria-label="Ouvrir"><CatalogIcon extra="open" /></button>
            <button aria-label="Enregistrer"><CatalogIcon extra="save" /></button>
          </div>
          <div className="flex items-center gap-2 ml-[10px] text-gray-700">
            <button aria-label="Annuler"><UndoIcon /></button>
            <button aria-label="Historique des annulations"><FiChevronDown size={8} strokeWidth={4} /></button>
            <button aria-label="Rétablir" className="ml-[-1px]"><UndoIcon redo /></button>
            <button aria-label="Historique des rétablissements"><FiChevronDown size={8} strokeWidth={4} /></button>
            <button aria-label="Personnaliser" className="ml-2">
              <svg width="9" height="8" viewBox="0 0 9 8">
                <path d="M.5 1h8M1.500 3.500h6l-3 3z" fill="none" stroke="#444" />
              </svg>
            </button>
          </div>
          <div className="ml-auto w-4 whitespace-nowrap text-[#505050]">Rechercher</div>
        </div>

        {/* Ribbon tabs */}
        <nav className="flex h-[26px] pl-[7px] text-[13px] whitespace-nowrap text-black">
          {tabs.map((tab) => (
            <button key={tab} className="px-[15px] h-[25px] pt-[2px] shrink-0">
              {tab === "Analyse" ? (
                <span className="block h-[23px] leading-[23px] font-semibold border-b-3 border-[#0079d0]">{tab}</span>
              ) : (
                tab
              )}
            </button>
          ))}
          <button className="ml-[22px] px-[15px] pt-[1px] h-[25px] shrink-0 rounded bg-white border border-[#dfe1e1]">Table</button>
          <button className="ml-4 px-[17px] pt-[1px] h-[25px] shrink-0 rounded bg-white border border-[#dfe1e1]">Couche d'entités</button>
        </nav>

        <Ribbon />
      </div>

      {/* Workspace */}
      <div className="flex flex-1 min-h-0">
        <ContentsPanel />
        <MapView />
      </div>

      <ContextMenu />
      <JoinMenu />
      <Tooltip />
    </div>
  );
}
